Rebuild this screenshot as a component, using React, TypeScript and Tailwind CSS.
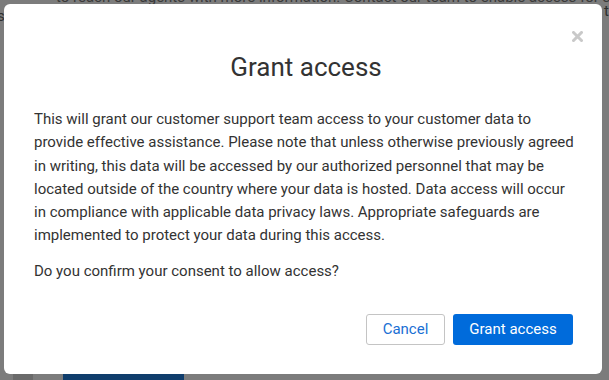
export default function App() {
  return (
    <div className="relative h-[380px] w-[609px] overflow-hidden bg-[#7c7c7c] font-['Roboto',sans-serif]">
      {/* page behind the overlay */}
      <div className="absolute inset-0">
        <div className="absolute left-[13px] top-[300px] h-[80px] w-[20px] bg-[#6a6a6a]" />
        <div className="absolute left-[-3px] top-[5px] text-[15px] text-[#2e2e2e]">s</div>
        <div className="absolute left-[604px] top-[0px] text-[15px] text-[#2e2e2e]">t</div>
        <div className="absolute left-[56px] top-[-14px] whitespace-nowrap text-[15px] text-[#3a3a3a]">
          to reach our agents with more information. Contact our team to enable access for support
        </div>
        <div className="absolute left-[63px] top-[374px] h-[6px] w-[121px] bg-[#0f3d6c]" />
      </div>

      {/* modal */}
      <div className="relative flex h-full p-[4px] pr-[7px] pb-[6px]">
        <div className="relative flex flex-1 flex-col rounded-[6px] bg-white pl-[30px] pr-[24px] text-[#333333]">
          <button className="absolute right-[19px] top-[27px] flex h-[11px] w-[11px] items-center justify-center">
            <svg width="11" height="11" viewBox="0 0 11 11">
              <path d="M1.5 1.5L9.5 9.5M9.5 1.5L1.5 9.5" stroke="#c9c9c9" strokeWidth="3" strokeLinecap="square" />
            </svg>
          </button>
          <h2 className="pt-[47px] text-center text-[26px] leading-[32px] text-[#333333]">Grant access</h2>
          <p className="mt-[25px] text-[15px] leading-[23.3px]">
            This will grant our customer support team access to your customer data to provide effective assistance. Please note that unless otherwise previously agreed in writing, this data will be accessed by our authorized personnel that may be located outside of the country where your data is hosted. Data access will occur in compliance with applicable data privacy laws. Appropriate safeguards are implemented to protect your data during this access.
          </p>
          <p className="mt-[12px] text-[15px] leading-[23.3px]">Do you confirm your consent to allow access?</p>
          <div className="mt-[31px] flex justify-end gap-[8px] pr-[5px]">
            <button className="h-[31px] w-[79px] rounded-[3px] border border-[#c4c4c4] bg-white text-[15px] text-[#1a6fd4]">
              Cancel
            </button>
            <button className="h-[31px] w-[120px] rounded-[3px] bg-[#006bdb] text-[15px] text-white">
              Grant access
            </button>
          </div>
        </div>
      </div>
    </div>
  )
}
